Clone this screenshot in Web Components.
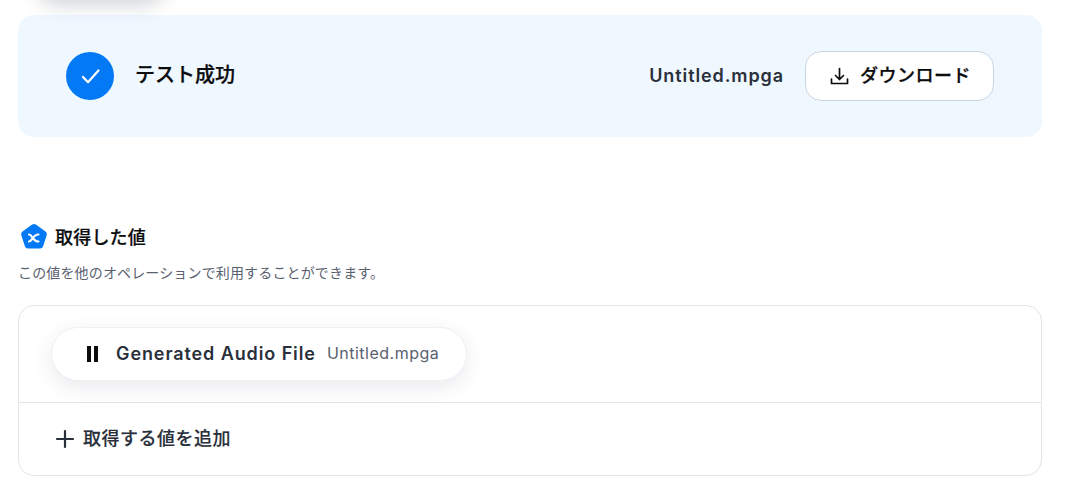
<!DOCTYPE html>
<html lang="ja">
<head>
<meta charset="utf-8">
<title>テスト成功</title>
<style>
  html, body { margin: 0; background: #fff; }
  body {
    width: 1072px;
    height: 488px;
    overflow: hidden;
    font-family: Inter, "Noto Sans CJK JP", sans-serif;
    color: #1f2329;
  }
</style>
</head>
<body>
<test-page>
  <result-banner title="テスト成功" file="Untitled.mpga"></result-banner>
  <values-section heading="取得した値" note="この値を他のオペレーションで利用することができます。">
    <value-pill label="Generated Audio File" file="Untitled.mpga"></value-pill>
  </values-section>
</test-page>

<script>
/**
 * The page frame, with the cut-off pill shadow at the top edge.
 */
customElements.define('test-page',
  class extends HTMLElement {
    constructor () {
      super()
      this.attachShadow({ mode: 'open' })
      this.shadowRoot.innerHTML = `
        <style>
          :host {
            display: block;
            position: relative;
            padding: 15px 30px 0 18px;
          }
          .cut-shadow {
            position: absolute;
            left: 38px;
            top: -40px;
            width: 126px;
            height: 40px;
            border-radius: 20px;
            box-shadow: 0 4px 20px rgba(30, 40, 60, .22);
          }
        </style>
        <div class="cut-shadow"></div>
        <slot></slot>
      `
    }
  }
)

/**
 * The blue result banner.
 */
customElements.define('result-banner',
  class extends HTMLElement {
    constructor () {
      super()
      this.attachShadow({ mode: 'open' })
    }

    connectedCallback () {
      this.shadowRoot.innerHTML = `
        <style>
          :host {
            display: flex;
            align-items: center;
            height: 122px;
            padding: 0 48px;
            border-radius: 16px;
            background: #eff7ff;
          }
          .check {
            width: 48px;
            height: 48px;
            border-radius: 50%;
            background: #0479f5;
            display: flex;
            align-items: center;
            justify-content: center;
          }
          h2 {
            margin: 0 0 2px 21px;
            font-size: 20px;
            font-weight: 500;
            -webkit-text-stroke: .25px #0b0c0e;
            line-height: 28px;
            color: #0b0c0e;
            flex: 1;
          }
          .file {
            font-size: 18px;
            font-weight: 600;
            letter-spacing: .9px;
            color: #2a303b;
            margin: 0 21px 2px 0;
          }
          button {
            box-sizing: border-box;
            width: 189px;
            height: 50px;
            border: 1px solid #cbd5e1;
            border-radius: 16px;
            background: #fff;
            font: 500 18px Inter, "Noto Sans CJK JP", sans-serif;
            -webkit-text-stroke: .25px #0b0c0e;
            letter-spacing: .5px;
            color: #0b0c0e;
            display: flex;
            align-items: center;
            gap: 10px;
            padding: 0 0 0 24px;
          }
          button span {
            margin-bottom: 5px;
          }
        </style>
        <div class="check">
          <svg width="24" height="24" viewBox="0 0 24 24" fill="none" stroke="#fff" stroke-width="2.2" stroke-linecap="round" stroke-linejoin="round"><path d="M5 13l5 5.2L20.5 6.5"/></svg>
        </div>
        <h2>${this.getAttribute('title')}</h2>
        <span class="file">${this.getAttribute('file')}</span>
        <button>
          <svg width="20" height="20" viewBox="0 0 20 20" fill="none" stroke="#0b0c0e" stroke-width="1.7" stroke-linecap="round" stroke-linejoin="round"><path d="M9.5 2.5v11M5.5 9.5l4 4 4-4M1.5 13v4.5h16V13"/></svg>
          <span>ダウンロード</span>
        </button>
      `
    }
  }
)

/**
 * The section that lists the values that were fetched.
 */
customElements.define('values-section',
  class extends HTMLElement {
    constructor () {
      super()
      this.attachShadow({ mode: 'open' })
    }

    connectedCallback () {
      this.shadowRoot.innerHTML = `
        <style>
          :host {
            display: block;
            margin-top: 85px;
          }
          header {
            display: flex;
            align-items: center;
            gap: 7px;
            height: 30px;
            padding-left: 2px;
          }
          h3 {
            margin: 0 0 2px;
            font-size: 18px;
            font-weight: 500;
            -webkit-text-stroke: .2px #0b0c0e;
            letter-spacing: .2px;
            color: #0b0c0e;
          }
          p {
            margin: 11px 0 22px;
            font-size: 14px;
            line-height: 20px;
            letter-spacing: .15px;
            color: #596170;
          }
          .box {
            border: 1px solid #e2e4e9;
            border-radius: 16px;
          }
          .items {
            box-sizing: border-box;
            height: 96px;
            padding: 21px 32px 0;
          }
          .add {
            box-sizing: border-box;
            height: 73px;
            border-top: 1px solid #e2e4e9;
            display: flex;
            align-items: center;
            gap: 8px;
            padding: 0 0 1px 36px;
            font-size: 18px;
            font-weight: 500;
            -webkit-text-stroke: .15px #2a303b;
            letter-spacing: .5px;
            color: #2a303b;
          }
          .add span {
            margin-bottom: 4px;
          }
        </style>
        <header>
          <svg width="28" height="28" viewBox="0 0 28 28">
            <path d="M12.1 1.6a3.2 3.2 0 0 1 3.8 0l9.6 7a3.2 3.2 0 0 1 1.2 3.6l-3.6 11.1a3.2 3.2 0 0 1-3.1 2.2H8a3.2 3.2 0 0 1-3.1-2.2L1.3 12.2a3.2 3.2 0 0 1 1.2-3.6z" fill="#0479f5"/>
            <path d="M9 11.500c3.500 0 3.500 7 9.500 7M18.500 11.500c-6 0-6 7-9.500 7" fill="none" stroke="#fff" stroke-width="2.2" stroke-linecap="round"/>
          </svg>
          <h3>${this.getAttribute('heading')}</h3>
        </header>
        <p>${this.getAttribute('note')}</p>
        <div class="box">
          <div class="items"><slot></slot></div>
          <div class="add">
            <svg width="20" height="20" viewBox="0 0 20 20" fill="none" stroke="#2a303b" stroke-width="2.2" stroke-linecap="round"><path d="M10 2v16M2 10h16"/></svg>
            <span>取得する値を追加</span>
          </div>
        </div>
      `
    }
  }
)

/**
 * A fetched value shown as a pill.
 */
customElements.define('value-pill',
  class extends HTMLElement {
    constructor () {
      super()
      this.attachShadow({ mode: 'open' })
    }

    connectedCallback () {
      this.shadowRoot.innerHTML = `
        <style>
          :host {
            display: inline-flex;
            align-items: center;
            box-sizing: border-box;
            height: 54px;
            padding: 0 27px 0 35px;
            border: 1px solid #eef0f3;
            border-radius: 27px;
            background: #fff;
            box-shadow: 0 6px 20px rgba(40, 50, 80, .1);
          }
          svg {
            margin-right: 18px;
          }
          .label {
            font-size: 18px;
            font-weight: 600;
            letter-spacing: .9px;
            color: #2a303b;
            margin: 0 11px 2px 0;
          }
          .file {
            font-size: 16px;
            letter-spacing: .5px;
            color: #596170;
            margin-bottom: 2px;
          }
        </style>
        <svg width="11" height="16" viewBox="0 0 11 16" fill="#0b0c0e"><rect width="4" height="16"/><rect x="7" width="4" height="16"/></svg>
        <span class="label">${this.getAttribute('label')}</span>
        <span class="file">${this.getAttribute('file')}</span>
      `
    }
  }
)
</script>
</body>
</html>
